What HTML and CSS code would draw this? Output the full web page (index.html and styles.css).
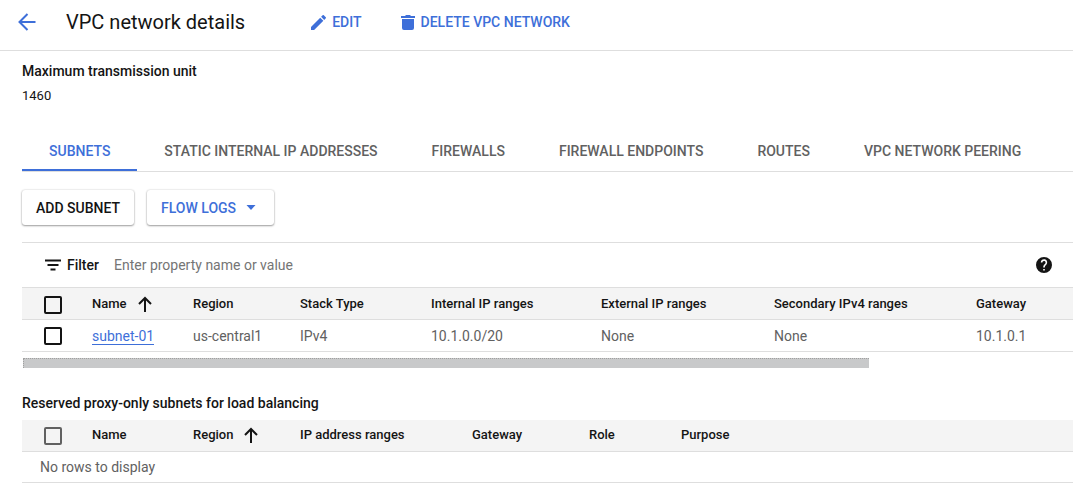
FILE: index.html
```html
<!DOCTYPE html>
<html lang="en">
<head>
<meta charset="utf-8">
<title>VPC network details</title>
<link rel="stylesheet" href="styles.css">
</head>
<body>
<header class="topbar">
  <button class="back" type="button" aria-label="Back"><svg width="18" height="18" viewBox="0 0 18 18" fill="none" stroke="currentColor" stroke-width="2"><path d="M17.500 9H2M9.500 1L1.500 9l8 8"/></svg></button>
  <h1 class="title">VPC network details</h1>
  <button class="action edit" type="button"><svg width="15" height="15" viewBox="3 3 18 18" fill="currentColor"><path d="M3 17.250V21h3.750L17.810 9.940l-3.750-3.750L3 17.250zM20.710 7.040a1 1 0 0 0 0-1.410l-2.340-2.340a1 1 0 0 0-1.410 0l-1.830 1.830 3.750 3.750 1.830-1.830z"/></svg>EDIT</button>
  <button class="action" type="button"><svg width="14" height="15" viewBox="0 0 14 15" fill="currentColor"><path d="M0 1h4l1-1h4l1 1h4v2H0zM1 4h12v9a2 2 0 0 1-2 2H3a2 2 0 0 1-2-2z"/></svg>DELETE VPC NETWORK</button>
</header>
<main class="content">
  <section class="property">
    <h2 class="label">Maximum transmission unit</h2>
    <p class="value">1460</p>
  </section>
  <nav class="tabs">
    <a class="tab selected" href="#subnets" aria-current="page">SUBNETS</a>
    <a class="tab" href="#addresses">STATIC INTERNAL IP ADDRESSES</a>
    <a class="tab" href="#firewalls">FIREWALLS</a>
    <a class="tab" href="#endpoints">FIREWALL ENDPOINTS</a>
    <a class="tab" href="#routes">ROUTES</a>
    <a class="tab" href="#peering">VPC NETWORK PEERING</a>
  </nav>
  <div class="buttons">
    <button class="raised" type="button">ADD SUBNET</button>
    <button class="raised primary" type="button">FLOW LOGS<svg width="10" height="5" viewBox="0 0 10 5" fill="currentColor"><path d="M0.500 0h9L5 5z"/></svg></button>
  </div>
  <div class="filter">
    <svg width="16" height="12" viewBox="0 0 16 12" stroke="currentColor" stroke-width="2"><path d="M0 1.500h16M2.500 6h11M5.500 10.500h5"/></svg>
    <label class="filter-label" for="filter">Filter</label>
    <input class="filter-input" id="filter" type="text" placeholder="Enter property name or value">
    <button class="help" type="button" aria-label="Help"><svg width="16" height="16" viewBox="2 2 20 20" fill="currentColor"><path d="M12 2a10 10 0 1 0 0 20 10 10 0 0 0 0-20zm1 17h-2v-2h2v2zm2.070-7.750l-.9.920C13.450 12.900 13 13.500 13 15h-2v-.5c0-1.100.45-2.100 1.170-2.830l1.240-1.260A2 2 0 1 0 10 9H8a4 4 0 1 1 7.070 2.250z"/></svg></button>
  </div>
  <table class="grid">
    <colgroup><col class="c-check"><col class="c-name"><col class="c-region"><col class="c-stack"><col class="c-internal"><col class="c-external"><col class="c-secondary"><col></colgroup>
    <thead><tr>
      <th class="pick"><input class="box" type="checkbox" aria-label="Select all subnets"></th>
      <th><span class="sorted">Name<svg width="14" height="16" viewBox="0 0 14 16" fill="none" stroke="currentColor" stroke-width="2"><path d="M7 16V2M1 8l6-6 6 6"/></svg></span></th>
      <th>Region</th><th>Stack Type</th><th>Internal IP ranges</th><th>External IP ranges</th><th>Secondary IPv4 ranges</th><th>Gateway</th>
    </tr></thead>
    <tbody><tr>
      <td class="pick"><input class="box" type="checkbox" aria-label="Select subnet-01"></td>
      <td><a class="link" href="#subnet-01">subnet-01</a></td><td>us-central1</td><td>IPv4</td><td>10.1.0.0/20</td><td>None</td><td>None</td><td>10.1.0.1</td>
    </tr></tbody>
  </table>
  <div class="scroll"><div class="thumb"></div></div>
  <h2 class="label">Reserved proxy-only subnets for load balancing</h2>
  <table class="grid reserved">
    <colgroup><col class="c-check"><col class="c-name"><col class="c-region"><col class="c-ranges"><col class="c-gateway"><col class="c-role"><col></colgroup>
    <thead><tr>
      <th class="pick"><input class="box muted" type="checkbox" aria-label="Select all reserved subnets"></th>
      <th>Name</th>
      <th><span class="sorted">Region<svg width="14" height="16" viewBox="0 0 14 16" fill="none" stroke="currentColor" stroke-width="2"><path d="M7 16V2M1 8l6-6 6 6"/></svg></span></th>
      <th>IP address ranges</th><th>Gateway</th><th>Role</th><th>Purpose</th>
    </tr></thead>
    <tbody><tr><td class="empty" colspan="7">No rows to display</td></tr></tbody>
  </table>
</main>
</body>
</html>
```
FILE: styles.css
```css
* { box-sizing: border-box; }
body {
  margin: 0;
  background: #fff;
  color: #141414;
  font: 14px/20px Roboto, "Liberation Sans", sans-serif;
  overflow-x: hidden;
}
button { font: inherit; color: inherit; background: none; border: 0; padding: 0; cursor: pointer; }
h1, h2, p { margin: 0; }
svg { display: block; flex: none; }

.topbar {
  display: flex;
  align-items: center;
  padding: 0 18px 6px;
  height: 51px;
  border-bottom: 1px solid #dedede;
}
.back { color: #3e6fd9; margin-right: 30px; }
.title { font-size: 20px; line-height: 28px; font-weight: 400; margin-right: 66px; white-space: nowrap; }
.action { display: flex; align-items: center; gap: 6px; color: #3e6fd9; font-weight: 500; white-space: nowrap; }
.edit { margin-right: 39px; }

.content { padding-left: 22px; }
.property { padding-top: 10px; }
.label { font-size: 14px; line-height: 20px; font-weight: 500; }
.value { font-size: 13px; line-height: 20px; margin-top: 5px; }

.tabs { display: flex; margin-top: 25px; border-bottom: 1px solid #dedede; }
.tab {
  padding: 10px 27px 8px;
  border-bottom: 2px solid transparent;
  color: #616161;
  font-weight: 500;
  text-decoration: none;
  white-space: nowrap;
}
.selected { color: #3e6fd9; border-color: #3e6fd9; }

.buttons { display: flex; gap: 13px; padding: 18px 0 17px; border-bottom: 1px solid #dedede; }
.raised {
  display: flex;
  align-items: center;
  gap: 10px;
  height: 35px;
  padding: 0 14px;
  border-radius: 3px;
  font-weight: 500;
  box-shadow: 0 1px 2px rgba(0, 0, 0, .35), 0 0 2px rgba(0, 0, 0, .2);
}
.primary { color: #3e6fd9; padding-right: 18px; }

.filter { display: flex; align-items: center; height: 44px; padding: 0 21px 0 23px; }
.filter-label { font-weight: 500; margin: 0 15px 0 6px; }
.filter-input { flex: 1; min-width: 0; border: 0; outline: 0; padding: 0; font: inherit; color: inherit; background: none; }
.filter-input::placeholder { color: #757575; opacity: 1; }

.grid { width: 100%; table-layout: fixed; border-collapse: collapse; border-top: 1px solid #dedede; }
.grid tr { height: 32px; border-bottom: 1px solid #dedede; }
.grid th, .grid td { padding: 0; text-align: left; white-space: nowrap; }
.grid th { background: #f4f4f4; font-size: 13px; font-weight: 500; }
.grid td { color: #616161; }
.grid .pick { padding-left: 22px; }
.grid .empty { padding-left: 18px; }
.reserved { margin-top: 7px; border-top: 0; }
.reserved tr { height: 31px; }
.c-check { width: 70px; }
.c-name { width: 101px; }
.c-region { width: 107px; }
.c-stack { width: 131px; }
.c-internal { width: 170px; }
.c-external { width: 173px; }
.c-secondary { width: 202px; }
.c-ranges { width: 172px; }
.c-gateway { width: 117px; }
.c-role { width: 92px; }
.sorted { display: flex; align-items: center; gap: 11px; }
.box { appearance: none; display: block; width: 18px; height: 18px; margin: 2px 0 0; border: 2px solid #141414; border-radius: 2px; }
tbody .box { margin: 0; }
.muted { border-color: #616161; }
.link { color: #3e6fd9; text-decoration: none; border-bottom: 1px solid #3e6fd9; }

.scroll { padding: 6px 0 0 1px; margin-bottom: 25px; }
.thumb { width: 80.6%; height: 10px; background: #c8c9ca; border: 1px dotted #a0a0a0; border-width: 1px 0 0 1px; }
```
